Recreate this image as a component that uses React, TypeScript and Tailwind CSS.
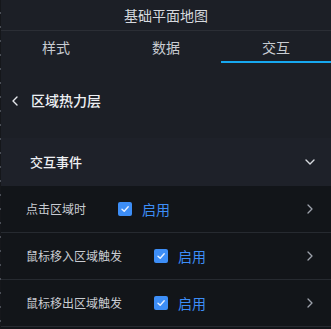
import React from "react";

const font = { fontFamily: '"Noto Sans CJK SC", "Noto Sans", sans-serif' };

function Check() {
  return (
    <span className="flex h-[14px] w-[14px] items-center justify-center rounded-[2px] bg-[#3d8ef7]">
      <svg width="10" height="10" viewBox="0 0 10 10" fill="none">
        <path d="M2 5.2 L4.2 7.3 L8.2 2.8" stroke="#e8f1ff" strokeWidth="1.4" strokeLinecap="round" strokeLinejoin="round" />
      </svg>
    </span>
  );
}

function Row({ label }: { label: string }) {
  return (
    <div className="flex h-[47px] items-center border-b border-[#262a30] pl-[25px] pr-[16px]">
      <span className="text-[12px] text-[#c9ccd2]">{label}</span>
      <span className="ml-[32px] flex items-center gap-[10px]">
        <Check />
        <span className="text-[14px] text-[#3d8ef7]">启用</span>
      </span>
      <svg className="ml-auto" width="10" height="12" viewBox="0 0 10 12" fill="none">
        <path d="M3 2 L7 6 L3 10" stroke="#9da2ab" strokeWidth="1.3" strokeLinecap="round" strokeLinejoin="round" />
      </svg>
    </div>
  );
}

export default function App() {
  return (
    <div className="flex h-[329px] w-[331px] overflow-hidden bg-[#1c1f26]" style={font}>
      <div className="w-px shrink-0 bg-[repeating-linear-gradient(to_bottom,#15171b_0px,#15171b_12px,#4a4e56_12px,#4a4e56_14px)]" />
      <div className="flex min-w-0 flex-1 flex-col">
        <div className="flex h-[31px] items-center justify-center border-b border-[#2b2e35] text-[14px] text-[#d6d9de]">
          基础平面地图
        </div>
        <div className="flex h-[32px]">
          <div className="flex flex-1 items-center justify-center text-[14px] text-[#c8ccd2]">样式</div>
          <div className="flex flex-1 items-center justify-center text-[14px] text-[#c8ccd2]">数据</div>
          <div className="flex flex-1 items-center justify-center border-b-2 border-[#17a8ef] pt-[2px] text-[14px] text-[#c8ccd2]">交互</div>
        </div>
        <div className="flex h-[75px] items-center pl-[9px]">
          <svg width="10" height="12" viewBox="0 0 10 12" fill="none">
            <path d="M7 2 L3 6 L7 10" stroke="#e6e8ec" strokeWidth="1.4" strokeLinecap="round" strokeLinejoin="round" />
          </svg>
          <span className="ml-[11px] text-[14px] font-medium text-[#eef0f3]">区域热力层</span>
        </div>
        <div className="flex h-[48px] items-center bg-[#1e2129] pl-[29px] pr-[15px]">
          <span className="text-[13px] font-medium text-[#eef0f3]">交互事件</span>
          <svg className="ml-auto" width="12" height="10" viewBox="0 0 12 10" fill="none">
            <path d="M2 3 L6 7 L10 3" stroke="#d6d9de" strokeWidth="1.4" strokeLinecap="round" strokeLinejoin="round" />
          </svg>
        </div>
        <div className="flex flex-1 flex-col bg-[#121519]">
          <Row label="点击区域时" />
          <Row label="鼠标移入区域触发" />
          <Row label="鼠标移出区域触发" />
        </div>
      </div>
    </div>
  );
}
